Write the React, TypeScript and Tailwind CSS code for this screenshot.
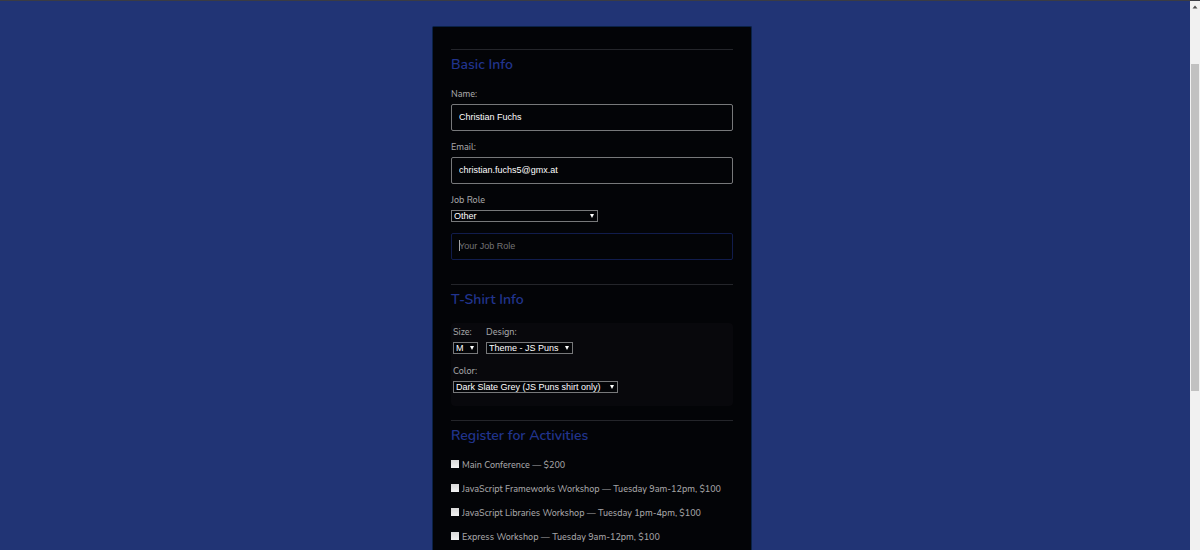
import type { ReactNode } from "react";

const labelFont = "font-['Nunito','Lato',sans-serif]";
const controlFont = "font-['Liberation_Sans',Arial,sans-serif]";

function Section({ title, className = "", children }: { title: string; className?: string; children: ReactNode }) {
  return (
    <fieldset className={`min-w-0 border-t border-[#24252a] pt-[5px] ${className}`}>
      <h2 className="mb-[13px] text-sm leading-5 font-semibold text-[#21348e]">{title}</h2>
      {children}
    </fieldset>
  );
}

function TextField({ id, label, value }: { id: string; label: string; value: string }) {
  return (
    <div className="mb-2.5 flex flex-col gap-1">
      <label htmlFor={id} className="leading-3">{label}</label>
      <input
        id={id}
        defaultValue={value}
        className={`${controlFont} h-[27px] w-full rounded-xs border border-[#77787a] bg-transparent px-[7px] pb-0.5 text-[9px] text-white outline-none`}
      />
    </div>
  );
}

function SelectField({ id, label, options, width }: { id: string; label: string; options: string[]; width: string }) {
  return (
    <div className="flex flex-col items-start gap-1">
      <label htmlFor={id} className="leading-3">{label}</label>
      <div className={`relative ${width}`}>
        <select
          id={id}
          className={`${controlFont} block h-3 w-full appearance-none border border-[#77787a] bg-[#030407] pl-0.5 text-[9px] leading-[10px] text-white outline-none`}
        >
          {options.map((option) => (
            <option key={option}>{option}</option>
          ))}
        </select>
        <svg viewBox="0 0 4 4" className="pointer-events-none absolute top-1 right-1 size-1 fill-white" aria-hidden="true">
          <path d="M0 0h4L2 4z" />
        </svg>
      </div>
    </div>
  );
}

const activities = [
  "Main Conference — $200",
  "JavaScript Frameworks Workshop — Tuesday 9am-12pm, $100",
  "JavaScript Libraries Workshop — Tuesday 1pm-4pm, $100",
  "Express Workshop — Tuesday 9am-12pm, $100",
];

export default function App() {
  return (
    <div className={`${labelFont} flex min-h-screen flex-col border-t border-[#3b3c44] bg-[#213475] text-[9px] font-medium text-[#a3a3a5]`}>
      <div className="flex flex-1">
        <main className="flex flex-1 justify-center pt-[25px] pr-1.5">
          <form className="w-full max-w-80 rounded-t-xs border border-b-0 border-[#0a2146] bg-[#030407] px-[18px] pt-[22px]">
            <Section title="Basic Info">
              <TextField id="name" label="Name:" value="Christian Fuchs" />
              <TextField id="email" label="Email:" value="christian.fuchs5@gmx.at" />
              <SelectField id="role" label="Job Role" options={["Other"]} width="w-[147px]" />
              <div className="relative mt-[11px]">
                <input
                  aria-label="Your Job Role"
                  placeholder="Your Job Role"
                  className={`${controlFont} block h-[27px] w-full rounded-xs border border-[#111c4c] bg-transparent px-[7px] pb-0.5 text-[9px] text-white outline-none placeholder:text-[#747476]`}
                />
                <span className="absolute top-[7px] left-2 h-[11px] w-px bg-[#a3a3a5]" />
              </div>
            </Section>

            <Section title="T-Shirt Info" className="mt-6">
              <div className="rounded-sm bg-[#08080c] px-0.5 pt-[3px] pb-[13px]">
                <div className="mb-[11px] flex gap-2">
                  <SelectField id="size" label="Size:" options={["M"]} width="w-[25px]" />
                  <SelectField id="design" label="Design:" options={["Theme - JS Puns"]} width="w-[87px]" />
                </div>
                <SelectField id="color" label="Color:" options={["Dark Slate Grey (JS Puns shirt only)"]} width="w-[165px]" />
              </div>
            </Section>

            <Section title="Register for Activities" className="mt-3.5">
              <div className="flex flex-col gap-3">
                {activities.map((activity) => (
                  <label key={activity} className="flex items-start gap-[3px] leading-3 whitespace-nowrap">
                    <input
                      type="checkbox"
                      className="mt-px size-2 shrink-0 appearance-none bg-linear-to-b from-[#d8d8d8] to-[#f2f2f2] checked:bg-[#21348e]"
                    />
                    {activity}
                  </label>
                ))}
              </div>
            </Section>
          </form>
        </main>

        <aside aria-hidden="true" className="flex w-2.5 flex-col bg-[#f1f1f1] px-px">
          <svg viewBox="0 0 8 12" className="h-3 w-2 fill-[#505050]">
            <path d="M1.500 7.500 4 4.500 6.500 7.500z" />
          </svg>
          <div className="mt-[51px] h-[327px] bg-[#c1c1c1]" />
        </aside>
      </div>
    </div>
  );
}
